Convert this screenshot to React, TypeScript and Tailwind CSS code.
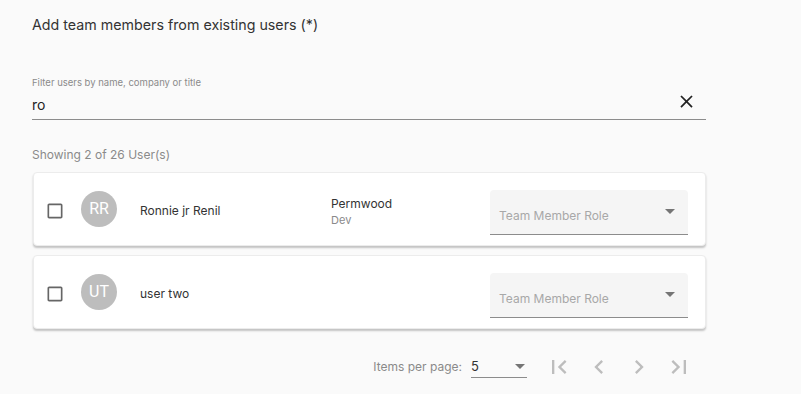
import React, { useState } from 'react';

interface Member {
    id: string;
    initials: string;
    name: string;
    company?: string;
    title?: string;
}

const members: Member[] = [
    { id: '1', initials: 'RR', name: 'Ronnie jr Renil', company: 'Permwood', title: 'Dev' },
    { id: '2', initials: 'UT', name: 'user two' },
];

const Icon: React.FC<{ d: string; className?: string }> = ({ d, className }) => (
    <svg viewBox="0 0 24 24" className={className} fill="currentColor">
        <path d={d} />
    </svg>
);

const CHECKBOX = 'M19 5v14H5V5h14m0-2H5c-1.11 0-2 .9-2 2v14c0 1.1.89 2 2 2h14c1.1 0 2-.9 2-2V5c0-1.11-.89-2-2-2z';
const CLOSE = 'M19 6.41L17.59 5 12 10.59 6.41 5 5 6.41 10.59 12 5 17.59 6.41 19 12 13.41 17.59 19 19 17.59 13.41 12z';
const FIRST = 'M18.41 16.59L13.82 12l4.59-4.59L17 6l-6 6 6 6zM6 6h2v12H6z';
const PREV = 'M15.41 7.41L14 6l-6 6 6 6 1.41-1.41L10.83 12z';
const NEXT = 'M10 6L8.59 7.41 13.17 12l-4.58 4.59L10 18l6-6z';
const LAST = 'M5.59 7.41L10.18 12l-4.59 4.59L7 18l6-6-6-6zM16 6h2v12h-2z';

const App: React.FC = () => {
    const [filter, setFilter] = useState('ro');

    return (
        <div className="min-h-[394px] bg-[#fafafa] pl-[32px] pr-[95px] pt-[14px] font-['Inter',sans-serif] text-[#333]">
            <h1 className="text-[14.25px] leading-[22px]">Add team members from existing users (*)</h1>

            {/* Filter */}
            <div className="mt-[40px] border-b border-[#8c8c8c]">
                <div className="text-[9.5px] leading-[14px] text-[#8a8a8a]">Filter users by name, company or title</div>
                <div className="flex items-center h-[29px]">
                    <input
                        className="flex-1 bg-transparent outline-none text-[14px] text-[#222]"
                        value={filter}
                        onChange={e => setFilter(e.target.value)}
                    />
                    <button className="mr-[9px] mb-[6px] text-[#222]" onClick={() => setFilter('')}>
                        <Icon d={CLOSE} className="w-[21px] h-[21px]" />
                    </button>
                </div>
            </div>

            <div className="mt-[26px] text-[12px] leading-[18px] text-[#8a8a8a]">Showing 2 of 26 User(s)</div>

            {/* List */}
            <div className="mt-[8px] ml-[1px] flex flex-col gap-[9px]">
                {members.map(m => (
                    <div
                        key={m.id}
                        className="h-[74px] bg-white rounded-[4px] border border-[#ececec] shadow-[0_2px_2px_rgba(0,0,0,0.22)] flex items-center pl-[11px] pr-[17px]"
                    >
                        <Icon d={CHECKBOX} className="mt-[4px] w-[20px] h-[20px] text-[#666]" />
                        <div className="ml-[16px] w-[36px] h-[36px] rounded-full bg-[#bdbdbd] text-white flex items-center justify-center text-[16px] font-['Roboto',sans-serif]">
                            {m.initials}
                        </div>
                        <div className="mt-[4px] ml-[23px] w-[191px] text-[12px] text-[#333]">{m.name}</div>
                        <div className="flex-1 leading-[16px] mt-[6px]">
                            {m.company && <div className="text-[12px] text-[#333]">{m.company}</div>}
                            {m.title && <div className="text-[11px] text-[#8a8a8a]">{m.title}</div>}
                        </div>
                        <div className="mt-[6px] w-[198px] h-[45px] bg-[#f5f5f5] rounded-t-[4px] border-b border-[#8c8c8c] relative flex items-end pl-[9px] pb-[9px]">
                            <span className="text-[12px] text-[#a8a8a8]">Team Member Role</span>
                            <span className="absolute right-[13px] top-[19px] w-0 h-0 border-l-[5px] border-r-[5px] border-t-[5px] border-l-transparent border-r-transparent border-t-[#757575]" />
                        </div>
                    </div>
                ))}
            </div>

            {/* Pagination */}
            <div className="mt-[18px] flex items-center justify-end pr-[7px] text-[12px] text-[#8a8a8a]">
                <span>Items per page:</span>
                <div className="ml-[9px] w-[56px] h-[22px] border-b border-[#8c8c8c] flex items-center justify-between relative">
                    <span className="text-[13px] text-[#333]">5</span>
                    <span className="mr-[2px] w-0 h-0 border-l-[5px] border-r-[5px] border-t-[5px] border-l-transparent border-r-transparent border-t-[#757575]" />
                </div>
                <div className="ml-[12px] flex text-[#bdbdbd]">
                    {[FIRST, PREV, NEXT, LAST].map((d, i) => (
                        <button key={i} className="w-[40px] h-[40px] flex items-center justify-center" disabled>
                            <Icon d={d} className="w-[28px] h-[28px]" />
                        </button>
                    ))}
                </div>
            </div>
        </div>
    );
};

export default App;
